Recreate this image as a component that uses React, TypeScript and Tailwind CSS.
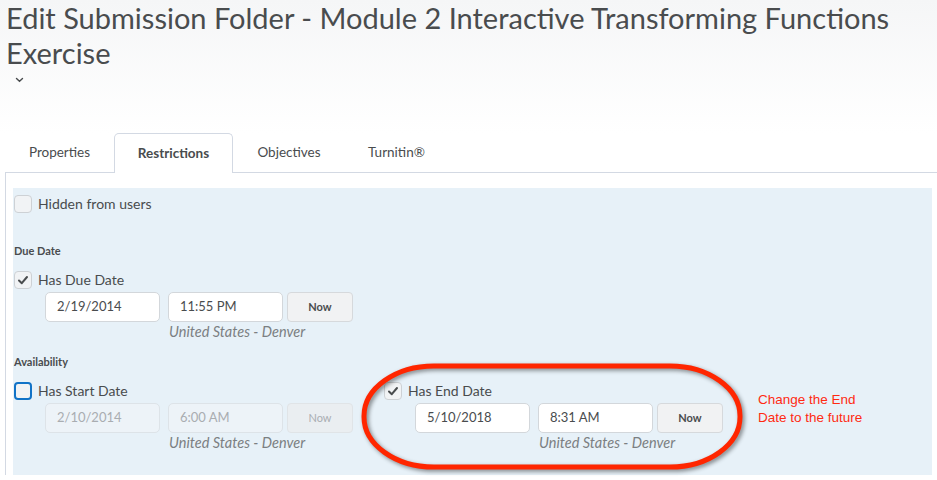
import React from 'react';

const Checkbox = ({ checked, focused }: { checked?: boolean; focused?: boolean }) => (
  <div
    className={`w-[18px] h-[18px] shrink-0 rounded-[4px] flex items-center justify-center bg-[#f1f3f5] ${
      focused ? 'border-2 border-[#1173c7]' : 'border border-[#cdd1d5]'
    }`}
  >
    {checked && (
      <svg width="12" height="12" viewBox="0 0 12 12">
        <path d="M2 6.5 L4.8 9.2 L10 3" fill="none" stroke="#494c4e" strokeWidth="2" strokeLinecap="round" strokeLinejoin="round" />
      </svg>
    )}
  </div>
);

const CheckRow = ({ label, checked, focused }: { label: string; checked?: boolean; focused?: boolean }) => (
  <div className="flex items-center gap-[6px] h-[18px]">
    <Checkbox checked={checked} focused={focused} />
    <span className="text-[14px] text-[#494c4e] leading-none">{label}</span>
  </div>
);

const DateRow = ({ date, time, disabled }: { date: string; time: string; disabled?: boolean }) => {
  const box = disabled
    ? 'bg-[#edf3f8] border-[#dde3e8] text-[#a9adb1]'
    : 'bg-white border-[#d3d7db] text-[#494c4e]';
  return (
    <div>
      <div className="flex items-center h-[30px]">
        <div className={`w-[115px] h-[30px] border rounded-[5px] pl-[11px] flex items-center text-[13px] ${box}`}>{date}</div>
        <div className={`ml-[8px] w-[115px] h-[30px] border rounded-[5px] pl-[11px] flex items-center text-[13px] ${box}`}>{time}</div>
        <div
          className={`ml-[4px] w-[66px] h-[30px] border rounded-[4px] flex items-center justify-center text-[11px] font-bold ${
            disabled ? 'bg-[#eaeef1] border-[#e0e4e7] text-[#a9adb1] font-normal' : 'bg-[#f1f2f3] border-[#d6d9dc] text-[#494c4e]'
          }`}
        >
          Now
        </div>
      </div>
      <div className="ml-[124px] h-[19px] flex items-center text-[14.5px] italic text-[#7b7f82]">United States - Denver</div>
    </div>
  );
};

export default function App() {
  return (
    <div className="w-[937px] h-[480px] bg-white relative overflow-hidden font-['Lato',sans-serif]">
      {/* Header */}
      <div className="h-[133px] bg-gradient-to-b from-[#f5f6f7] to-white pl-[6px]">
        <h1 className="text-[29px] leading-[35px] text-[#494c4e] font-normal">
          Edit Submission Folder - Module 2 Interactive Transforming Functions
          <br />
          Exercise
        </h1>
        <svg className="ml-[9px] mt-[7px]" width="9" height="6" viewBox="0 0 9 6">
          <path d="M1.5 1.5 L4.5 4.3 L7.5 1.5" fill="none" stroke="#494c4e" strokeWidth="1.4" strokeLinecap="round" />
        </svg>
      </div>

      {/* Tabs */}
      <div className="flex items-end h-[39px] pl-[5px] text-[13.5px] text-[#494c4e]">
        <div className="w-[109px] h-[39px] flex items-center justify-center">Properties</div>
        <div className="relative z-10 -mb-px w-[119px] h-[40px] flex items-center justify-center pb-px font-bold bg-white border border-b-0 border-[#d3d9e3] rounded-t-[5px]">
          Restrictions
        </div>
        <div className="w-[112px] h-[39px] flex items-center justify-center">Objectives</div>
        <div className="w-[103px] h-[39px] flex items-center justify-center">Turnitin®</div>
      </div>

      {/* Content */}
      <div className="ml-[5px] border-l border-t border-[#d3d9e3] pt-[15px] pl-[7px] pr-[5px]">
        <div className="bg-[#e7f1f8] pl-[1px] pt-[7px] pb-[23px]">
          <CheckRow label="Hidden from users" />

          <div className="mt-[31px] h-[14px] flex items-center text-[11px] font-bold text-[#494c4e]">Due Date</div>
          <div className="mt-[13px]">
            <CheckRow label="Has Due Date" checked />
          </div>
          <div className="mt-[3px] ml-[31px]">
            <DateRow date="2/19/2014" time="11:55 PM" />
          </div>

          <div className="mt-[14px] h-[14px] flex items-center text-[11px] font-bold text-[#494c4e]">Availability</div>
          <div className="mt-[13px] flex">
            <div className="w-[370px]">
              <CheckRow label="Has Start Date" focused />
              <div className="mt-[3px] ml-[31px]">
                <DateRow date="2/10/2014" time="6:00 AM" disabled />
              </div>
            </div>
            <div className="w-[370px]">
              <CheckRow label="Has End Date" checked />
              <div className="mt-[3px] ml-[31px]">
                <DateRow date="5/10/2018" time="8:31 AM" />
              </div>
            </div>
            <div className="ml-[4px] mt-[9px] text-[13.5px] leading-[18px] text-[#ff2a12] font-['Liberation_Sans',Arial,sans-serif]">
              Change the End
              <br />
              Date to the future
            </div>
          </div>
        </div>
      </div>

      {/* Annotation ellipse */}
      <svg className="absolute left-0 top-0 pointer-events-none drop-shadow-[2px_2px_2px_rgba(0,0,0,0.45)]" width="937" height="480">
        <rect x="364" y="366" width="376" height="101" rx="70" ry="50" fill="none" stroke="#ff2600" strokeWidth="5" />
      </svg>
    </div>
  );
}
